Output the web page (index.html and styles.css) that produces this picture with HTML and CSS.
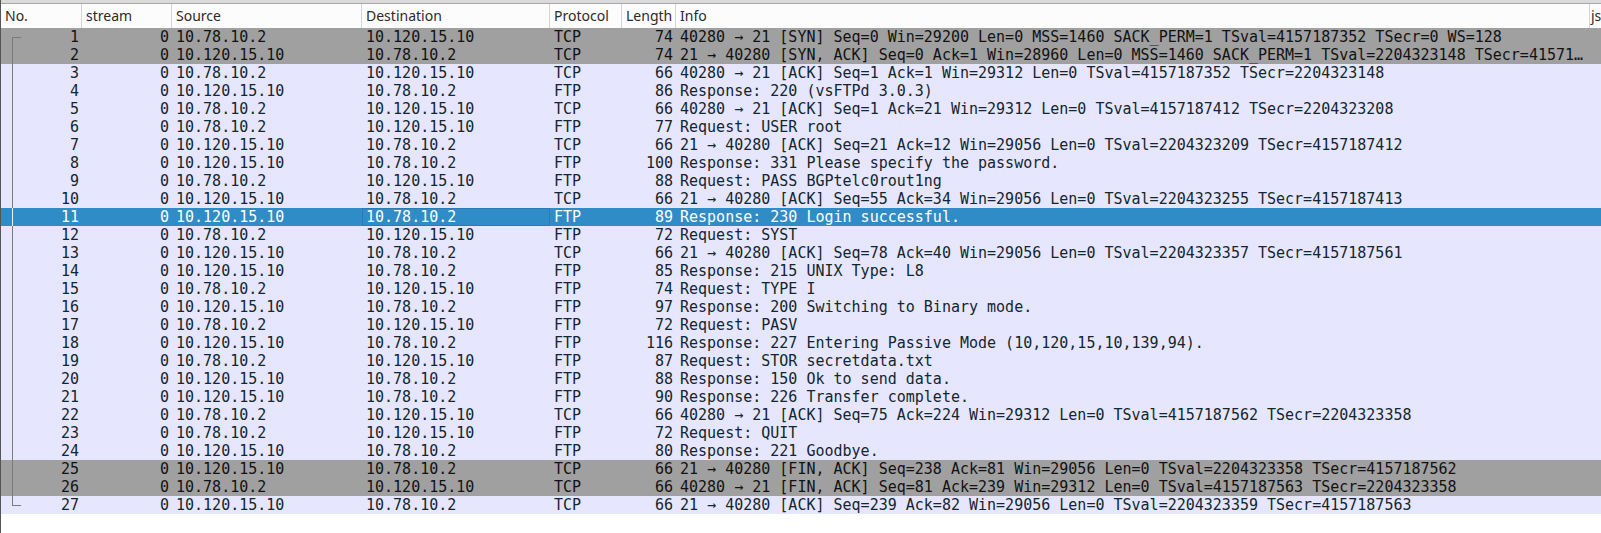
FILE: index.html
```html
<!DOCTYPE html>
<html>
<head>
<meta charset="utf-8">
<link rel="stylesheet" href="styles.css">
</head>
<body>
<div class="view">
  <div class="topband"></div>
  <div class="grid head">
    <div class="h">No.</div>
    <div class="h">stream</div>
    <div class="h">Source</div>
    <div class="h">Destination</div>
    <div class="h">Protocol</div>
    <div class="h">Length</div>
    <div class="h">Info</div>
    <div class="h last">js</div>
  </div>
  <div class="rows">
    <div class="grid row syn"><div class="c num tree t-first">1</div><div class="c num">0</div><div class="c">10.78.10.2</div><div class="c">10.120.15.10</div><div class="c">TCP</div><div class="c num">74</div><div class="c">40280 → 21 [SYN] Seq=0 Win=29200 Len=0 MSS=1460 SACK_PERM=1 TSval=4157187352 TSecr=0 WS=128</div><div class="c"></div></div>
    <div class="grid row syn"><div class="c num tree t-mid">2</div><div class="c num">0</div><div class="c">10.120.15.10</div><div class="c">10.78.10.2</div><div class="c">TCP</div><div class="c num">74</div><div class="c">21 → 40280 [SYN, ACK] Seq=0 Ack=1 Win=28960 Len=0 MSS=1460 SACK_PERM=1 TSval=2204323148 TSecr=41571…</div><div class="c"></div></div>
    <div class="grid row"><div class="c num tree t-mid">3</div><div class="c num">0</div><div class="c">10.78.10.2</div><div class="c">10.120.15.10</div><div class="c">TCP</div><div class="c num">66</div><div class="c">40280 → 21 [ACK] Seq=1 Ack=1 Win=29312 Len=0 TSval=4157187352 TSecr=2204323148</div><div class="c"></div></div>
    <div class="grid row"><div class="c num tree t-mid">4</div><div class="c num">0</div><div class="c">10.120.15.10</div><div class="c">10.78.10.2</div><div class="c">FTP</div><div class="c num">86</div><div class="c">Response: 220 (vsFTPd 3.0.3)</div><div class="c"></div></div>
    <div class="grid row"><div class="c num tree t-mid">5</div><div class="c num">0</div><div class="c">10.78.10.2</div><div class="c">10.120.15.10</div><div class="c">TCP</div><div class="c num">66</div><div class="c">40280 → 21 [ACK] Seq=1 Ack=21 Win=29312 Len=0 TSval=4157187412 TSecr=2204323208</div><div class="c"></div></div>
    <div class="grid row"><div class="c num tree t-mid">6</div><div class="c num">0</div><div class="c">10.78.10.2</div><div class="c">10.120.15.10</div><div class="c">FTP</div><div class="c num">77</div><div class="c">Request: USER root</div><div class="c"></div></div>
    <div class="grid row"><div class="c num tree t-mid">7</div><div class="c num">0</div><div class="c">10.120.15.10</div><div class="c">10.78.10.2</div><div class="c">TCP</div><div class="c num">66</div><div class="c">21 → 40280 [ACK] Seq=21 Ack=12 Win=29056 Len=0 TSval=2204323209 TSecr=4157187412</div><div class="c"></div></div>
    <div class="grid row"><div class="c num tree t-mid">8</div><div class="c num">0</div><div class="c">10.120.15.10</div><div class="c">10.78.10.2</div><div class="c">FTP</div><div class="c num">100</div><div class="c">Response: 331 Please specify the password.</div><div class="c"></div></div>
    <div class="grid row"><div class="c num tree t-mid">9</div><div class="c num">0</div><div class="c">10.78.10.2</div><div class="c">10.120.15.10</div><div class="c">FTP</div><div class="c num">88</div><div class="c">Request: PASS BGPtelc0rout1ng</div><div class="c"></div></div>
    <div class="grid row"><div class="c num tree t-mid">10</div><div class="c num">0</div><div class="c">10.120.15.10</div><div class="c">10.78.10.2</div><div class="c">TCP</div><div class="c num">66</div><div class="c">21 → 40280 [ACK] Seq=55 Ack=34 Win=29056 Len=0 TSval=2204323255 TSecr=4157187413</div><div class="c"></div></div>
    <div class="grid row sel"><div class="c num tree t-mid">11</div><div class="c num">0</div><div class="c">10.120.15.10</div><div class="c focus">10.78.10.2</div><div class="c">FTP</div><div class="c num">89</div><div class="c">Response: 230 Login successful.</div><div class="c"></div></div>
    <div class="grid row"><div class="c num tree t-mid">12</div><div class="c num">0</div><div class="c">10.78.10.2</div><div class="c">10.120.15.10</div><div class="c">FTP</div><div class="c num">72</div><div class="c">Request: SYST</div><div class="c"></div></div>
    <div class="grid row"><div class="c num tree t-mid">13</div><div class="c num">0</div><div class="c">10.120.15.10</div><div class="c">10.78.10.2</div><div class="c">TCP</div><div class="c num">66</div><div class="c">21 → 40280 [ACK] Seq=78 Ack=40 Win=29056 Len=0 TSval=2204323357 TSecr=4157187561</div><div class="c"></div></div>
    <div class="grid row"><div class="c num tree t-mid">14</div><div class="c num">0</div><div class="c">10.120.15.10</div><div class="c">10.78.10.2</div><div class="c">FTP</div><div class="c num">85</div><div class="c">Response: 215 UNIX Type: L8</div><div class="c"></div></div>
    <div class="grid row"><div class="c num tree t-mid">15</div><div class="c num">0</div><div class="c">10.78.10.2</div><div class="c">10.120.15.10</div><div class="c">FTP</div><div class="c num">74</div><div class="c">Request: TYPE I</div><div class="c"></div></div>
    <div class="grid row"><div class="c num tree t-mid">16</div><div class="c num">0</div><div class="c">10.120.15.10</div><div class="c">10.78.10.2</div><div class="c">FTP</div><div class="c num">97</div><div class="c">Response: 200 Switching to Binary mode.</div><div class="c"></div></div>
    <div class="grid row"><div class="c num tree t-mid">17</div><div class="c num">0</div><div class="c">10.78.10.2</div><div class="c">10.120.15.10</div><div class="c">FTP</div><div class="c num">72</div><div class="c">Request: PASV</div><div class="c"></div></div>
    <div class="grid row"><div class="c num tree t-mid">18</div><div class="c num">0</div><div class="c">10.120.15.10</div><div class="c">10.78.10.2</div><div class="c">FTP</div><div class="c num">116</div><div class="c">Response: 227 Entering Passive Mode (10,120,15,10,139,94).</div><div class="c"></div></div>
    <div class="grid row"><div class="c num tree t-mid">19</div><div class="c num">0</div><div class="c">10.78.10.2</div><div class="c">10.120.15.10</div><div class="c">FTP</div><div class="c num">87</div><div class="c">Request: STOR secretdata.txt</div><div class="c"></div></div>
    <div class="grid row"><div class="c num tree t-mid">20</div><div class="c num">0</div><div class="c">10.120.15.10</div><div class="c">10.78.10.2</div><div class="c">FTP</div><div class="c num">88</div><div class="c">Response: 150 Ok to send data.</div><div class="c"></div></div>
    <div class="grid row"><div class="c num tree t-mid">21</div><div class="c num">0</div><div class="c">10.120.15.10</div><div class="c">10.78.10.2</div><div class="c">FTP</div><div class="c num">90</div><div class="c">Response: 226 Transfer complete.</div><div class="c"></div></div>
    <div class="grid row"><div class="c num tree t-mid">22</div><div class="c num">0</div><div class="c">10.78.10.2</div><div class="c">10.120.15.10</div><div class="c">TCP</div><div class="c num">66</div><div class="c">40280 → 21 [ACK] Seq=75 Ack=224 Win=29312 Len=0 TSval=4157187562 TSecr=2204323358</div><div class="c"></div></div>
    <div class="grid row"><div class="c num tree t-mid">23</div><div class="c num">0</div><div class="c">10.78.10.2</div><div class="c">10.120.15.10</div><div class="c">FTP</div><div class="c num">72</div><div class="c">Request: QUIT</div><div class="c"></div></div>
    <div class="grid row"><div class="c num tree t-mid">24</div><div class="c num">0</div><div class="c">10.120.15.10</div><div class="c">10.78.10.2</div><div class="c">FTP</div><div class="c num">80</div><div class="c">Response: 221 Goodbye.</div><div class="c"></div></div>
    <div class="grid row syn"><div class="c num tree t-mid">25</div><div class="c num">0</div><div class="c">10.120.15.10</div><div class="c">10.78.10.2</div><div class="c">TCP</div><div class="c num">66</div><div class="c">21 → 40280 [FIN, ACK] Seq=238 Ack=81 Win=29056 Len=0 TSval=2204323358 TSecr=4157187562</div><div class="c"></div></div>
    <div class="grid row syn"><div class="c num tree t-mid">26</div><div class="c num">0</div><div class="c">10.78.10.2</div><div class="c">10.120.15.10</div><div class="c">TCP</div><div class="c num">66</div><div class="c">40280 → 21 [FIN, ACK] Seq=81 Ack=239 Win=29312 Len=0 TSval=4157187563 TSecr=2204323358</div><div class="c"></div></div>
    <div class="grid row"><div class="c num tree t-last">27</div><div class="c num">0</div><div class="c">10.120.15.10</div><div class="c">10.78.10.2</div><div class="c">TCP</div><div class="c num">66</div><div class="c">21 → 40280 [ACK] Seq=239 Ack=82 Win=29056 Len=0 TSval=2204323359 TSecr=4157187563</div><div class="c"></div></div>
  </div>
</div>
</body>
</html>
```
FILE: styles.css
```css
html, body {
  margin: 0;
  padding: 0;
  background: #ffffff;
}
.view {
  width: 1601px;
  height: 533px;
  border-left: 1px solid #555555;
  box-sizing: border-box;
  display: flex;
  flex-direction: column;
  overflow: hidden;
}
.topband {
  height: 3px;
  background: #dadada;
  border-bottom: 1px solid #a8a8a8;
  flex: none;
}
.grid {
  display: grid;
  grid-template-columns: 81px 90px 190px 188px 72px 54px 914px 11px;
}
.head {
  height: 24px;
  background: #fcfcfc;
  font-family: "Noto Sans", "Open Sans", sans-serif;
  font-size: 14px;
  color: #2a2a2a;
  flex: none;
}
.h {
  line-height: 24px;
  padding-left: 4px;
  border-right: 1px solid #d4d4d4;
  white-space: nowrap;
  overflow: hidden;
}
.h.last {
  border-right: none;
  padding-left: 1px;
}
.rows {
  display: flex;
  flex-direction: column;
}
.row {
  height: 18px;
  background: #e7e6ff;
  color: #12272e;
  font-family: "DejaVu Sans Mono", "Liberation Mono", monospace;
  font-size: 15px;
}
.row.syn {
  background: #a0a0a0;
  color: #121212;
}
.row.sel {
  background: #308cc6;
  color: #ffffff;
}
.c {
  line-height: 18px;
  padding: 0 3px 0 4px;
  white-space: pre;
  overflow: hidden;
  box-sizing: border-box;
}
.num {
  text-align: right;
}
.tree {
  position: relative;
}
.tree::before {
  content: "";
  position: absolute;
  left: 11px;
  width: 0;
  border-left: 1px solid #7a7a7a;
}
.t-first::before {
  top: 9px;
  bottom: 0;
  width: 8px;
  border-top: 1px solid #7a7a7a;
}
.t-mid::before {
  top: 0;
  bottom: 0;
}
.t-last::before {
  top: 0;
  height: 9px;
  width: 8px;
  border-bottom: 1px solid #7a7a7a;
}
.sel .tree::before {
  border-color: #e8f2fa;
}
.focus {
  box-shadow: inset 0 0 0 1px #2a7cb2;
}
```
